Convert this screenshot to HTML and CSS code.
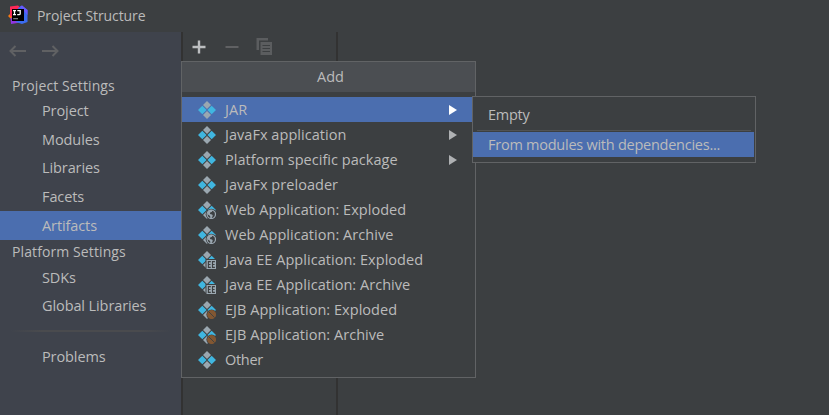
FILE: index.html
```
<!DOCTYPE html>
<html lang="en">
<head>
<meta charset="utf-8">
<title>Project Structure</title>
<link rel="stylesheet" href="styles.css">
</head>
<body>
<svg class="defs" width="0" height="0" aria-hidden="true">
  <symbol id="artifact" viewBox="0 0 18 18">
    <path fill="#9aa7b0" d="M9 0 13 4 9 8 5 4zM9 10l4 4-4 4-4-4z"/>
    <path fill="#40b6e0" d="M4.300 4.700 8.600 9l-4.300 4.300L0 9zM13.700 4.700 18 9l-4.300 4.300L9.400 9z"/>
  </symbol>
  <symbol id="web" viewBox="0 0 18 18">
    <use href="#artifact"/>
    <circle cx="13.3" cy="13.3" r="5.600" fill="#3c3f41"/>
    <circle cx="13.3" cy="13.3" r="4.200" fill="#3c3f41" stroke="#9aa7b0" stroke-width="1.200"/>
    <path fill="#9aa7b0" d="M9.300 11.200c1-2 3.400-2.900 5.200-2l-.7 1.700-1.400.4-.5 1.600 2.200.6.7 1.200-1.300 2.600-1.100.1-.3-2.300-2.200-1.600z"/>
  </symbol>
  <symbol id="ee" viewBox="0 0 18 18">
    <use href="#artifact"/>
    <path fill="#3c3f41" d="M7.500 8H18v10H7.500z"/>
    <path fill="#9aa7b0" d="M8.500 9H18.500v9H8.500z"/>
    <path fill="none" stroke="#3c3f41" stroke-width="1.100" d="M12.800 10.600h-2.400v5.800h2.400M10.400 13.500h2.100M16.900 10.600h-2.400v5.800h2.400M14.500 13.500h2.100"/>
  </symbol>
  <symbol id="ejb" viewBox="0 0 18 18">
    <use href="#artifact"/>
    <circle cx="13.600" cy="13.600" r="5.200" fill="#3c3f41"/>
    <circle cx="13.600" cy="13.600" r="4.500" fill="#825732"/>
    <path stroke="#3c3f41" stroke-width=".9" d="m10.600 10.600 6 6"/>
  </symbol>
</svg>

<header class="titlebar">
  <svg class="logo" width="20" height="20" viewBox="0 0 20 20">
    <path fill="#f97a12" d="M0 11 4 7v8z"/>
    <path fill="#fe2857" d="M2 1.500 10 .5l5 4.500-6 9-7-3z"/>
    <path fill="#9135e0" d="m2.500 13 8-1.500 2 6L3 19z"/>
    <path fill="#3b6cf0" d="M10 3 14 .5 19.500 5v12L14 19l-6-2z"/>
    <path fill="#6b57ff" d="m12 1.500 2-1L19.500 5v5z"/>
    <path fill="#000" d="M4 4h12v12H4z"/>
    <path fill="none" stroke="#fff" stroke-width="1.300" d="M5 5.700h3M6.500 5.700v4M5 9.700h3M9.300 5.700h2.900v3q0 1-1.200 1H9.200"/>
    <path fill="#777" d="M5.200 13h4.800v1.300H5.200z"/>
  </svg>
  <span class="title">Project Structure</span>
</header>

<main class="window">
  <nav class="sidebar">
    <div class="history">
      <svg width="50" height="14" viewBox="0 0 50 14" fill="none" stroke="#606163" stroke-width="2">
        <path d="M6.500 2 1.500 7l5 5M1.500 7H17M43.500 2l5 5-5 5M48.500 7H33"/>
      </svg>
    </div>
    <h2 class="group">Project Settings</h2>
    <a class="item">Project</a>
    <a class="item">Modules</a>
    <a class="item">Libraries</a>
    <a class="item">Facets</a>
    <a class="item selected">Artifacts</a>
    <h2 class="group platform">Platform Settings</h2>
    <a class="item">SDKs</a>
    <a class="item">Global Libraries</a>
    <div class="rule"></div>
    <a class="item">Problems</a>
  </nav>
  <section class="list">
    <div class="toolbar">
      <svg width="80" height="18" viewBox="0 0 80 18">
        <path fill="none" stroke="#bcbec0" stroke-width="2.400" d="M7 2.500v13M.5 9h13"/>
        <path stroke="#606163" stroke-width="2" d="M33.500 9h13"/>
        <path fill="#5b5d5f" d="M64.500 0H76v2.500h-9V12h-2.500zM68.500 4H80v13H68.500z"/>
        <path stroke="#3c3f41" stroke-width="1.200" d="M70.500 7.500h7.500M70.500 10.500h7.500M70.500 13.500h7.500"/>
      </svg>
    </div>
  </section>
  <section class="detail"></section>
</main>

<div class="popup">
  <div class="popup-title">Add</div>
  <ul class="menu">
    <li class="selected"><svg><use href="#artifact"/></svg><span>JAR</span><i class="arrow"></i></li>
    <li><svg><use href="#artifact"/></svg><span>JavaFx application</span><i class="arrow"></i></li>
    <li><svg><use href="#artifact"/></svg><span>Platform specific package</span><i class="arrow"></i></li>
    <li><svg><use href="#artifact"/></svg><span>JavaFx preloader</span></li>
    <li><svg><use href="#web"/></svg><span>Web Application: Exploded</span></li>
    <li><svg><use href="#web"/></svg><span>Web Application: Archive</span></li>
    <li><svg><use href="#ee"/></svg><span>Java EE Application: Exploded</span></li>
    <li><svg><use href="#ee"/></svg><span>Java EE Application: Archive</span></li>
    <li><svg><use href="#ejb"/></svg><span>EJB Application: Exploded</span></li>
    <li><svg><use href="#ejb"/></svg><span>EJB Application: Archive</span></li>
    <li><svg><use href="#artifact"/></svg><span>Other</span></li>
  </ul>
</div>

<div class="submenu">
  <div class="option">Empty</div>
  <div class="line"></div>
  <div class="option selected">From modules with dependencies...</div>
</div>
</body>
</html>
```
FILE: styles.css
```
* { box-sizing: border-box; }
body {
  margin: 0;
  width: 829px;
  height: 415px;
  overflow: hidden;
  display: flex;
  flex-direction: column;
  position: relative;
  background: #3c3f41;
  color: #bbb;
  font: 14.5px/20px "Open Sans", "Noto Sans", sans-serif;
  white-space: nowrap;
}
.defs { position: absolute; }
.titlebar {
  height: 32px;
  display: flex;
  align-items: center;
  padding-left: 8px;
  gap: 9px;
}
.logo { margin-top: -3px; }
.title { font-size: 14px; letter-spacing: -0.1px; }
.window { flex: 1; display: flex; }
.sidebar { width: 181px; background: #3f434c; display: flex; flex-direction: column; }
.history { height: 43px; padding: 11px 0 0 9px; }
.group {
  margin: 0;
  height: 22px;
  padding-left: 12px;
  font-size: 14px;
  font-weight: 500;
  line-height: 22px;
  letter-spacing: 0.1px;
}
.platform { height: 24px; line-height: 24px; }
.item { height: 28.5px; padding-left: 42px; line-height: 28px; letter-spacing: -0.1px; }
.item.selected { line-height: 29px; }
.platform + .item { line-height: 27px; }
.selected { background: #4b6eaf; }
.rule {
  height: 2px;
  margin: 9px 10px 11px;
  background: linear-gradient(90deg, #4a4b4e00, #4a4b4e 20%, #4a4b4e 80%, #4a4b4e00);
}
.list { width: 157px; border: solid #323232; border-width: 0 2px; }
.toolbar { padding: 6px 0 0 9px; }
.detail { flex: 1; }
.popup {
  position: absolute;
  left: 181px;
  top: 61px;
  width: 295px;
  height: 317px;
  border: 1px solid #616365;
  background: #3c3f41;
}
.popup-title { height: 30px; background: #4b4e52; text-align: center; line-height: 30px; padding-left: 4px; }
.menu { list-style: none; margin: 0; padding: 5px 0 0; }
.menu li { height: 25px; display: flex; align-items: center; padding: 0 18px 0 16px; }
.menu svg { width: 18px; height: 18px; margin-right: 9px; }
.menu span { letter-spacing: 0.04px; }
.menu li:last-child span { letter-spacing: -0.3px; }
.arrow { margin-left: auto; border: solid transparent; border-width: 5px 0 5px 8px; border-left-color: #afb1b3; }
.menu .selected .arrow { border-left-color: #fff; }
.submenu {
  position: absolute;
  left: 472px;
  top: 96px;
  width: 284px;
  height: 67px;
  padding: 5px 1px 0 0;
  border: 1px solid #616365;
  background: #3c3f41;
}
.option { height: 25px; padding-left: 15px; line-height: 25px; letter-spacing: -0.25px; }
.line { height: 1px; margin: 3px 3px 1px 4px; background: #515355; }
```
